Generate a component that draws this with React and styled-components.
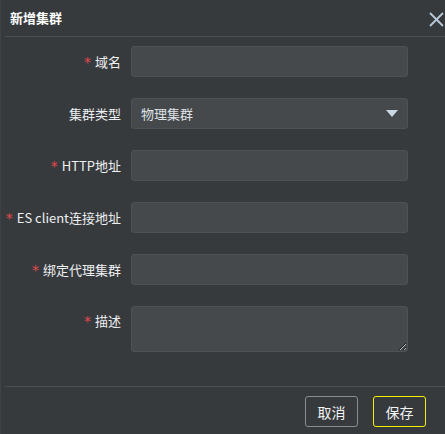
import React from 'react';
import styled, { createGlobalStyle } from 'styled-components';

// 全局样式
const GlobalStyle = createGlobalStyle`
  html, body {
    margin: 0;
    padding: 0;
    background: #373a3d;
  }
  body {
    font-family: "Noto Sans CJK SC", "Noto Sans", sans-serif;
    color: #e9ecef;
  }
`;

const Dialog = styled.div`
  width: 445px;
  height: 434px;
  box-sizing: border-box;
  background: #373a3d;
  border-left: 1px solid #3f4245;
  display: flex;
  flex-direction: column;
`;

const Header = styled.div`
  height: 36px;
  flex: none;
  margin-left: 4px;
  padding-left: 5px;
  border-bottom: 1px solid #4a4d51;
  display: flex;
  align-items: center;
  justify-content: space-between;
`;

const Title = styled.div`
  font-size: 13px;
  font-weight: 700;
  color: #ffffff;
  margin-top: -1px;
`;

const Close = styled.button`
  width: 16px;
  height: 16px;
  padding: 0;
  margin-right: 1px;
  margin-top: 2px;
  border: none;
  background: transparent;
  display: flex;
  align-items: center;
  justify-content: center;
  cursor: pointer;
`;

const Form = styled.div`
  flex: 1;
  padding-top: 9px;
  display: flex;
  flex-direction: column;
  gap: 21px;
`;

const Row = styled.div`
  display: flex;
  align-items: ${p => (p.$top ? 'flex-start' : 'center')};
  gap: 10px;
`;

const Label = styled.label`
  width: 120px;
  text-align: right;
  font-size: 13px;
  line-height: 18px;
  color: #eef0f2;
  white-space: nowrap;
  padding-top: ${p => (p.$top ? '6px' : '0')};
`;

const Star = styled.span`
  color: #e5484d;
  margin-right: 4px;
  font-size: 14px;
  font-family: "DejaVu Sans", sans-serif;
`;

const fieldBase = `
  width: 277px;
  box-sizing: border-box;
  background: #46494c;
  border: 1px solid #4e5155;
  border-radius: 3px;
  color: #dfe3e8;
  font-family: inherit;
  font-size: 13px;
  outline: none;
`;

const Input = styled.input`
  ${fieldBase}
  height: 31px;
  padding: 0 10px;
`;

const SelectBox = styled.div`
  ${fieldBase}
  height: 31px;
  padding: 0 9px;
  display: flex;
  align-items: center;
  justify-content: space-between;
`;

const TextArea = styled.textarea`
  ${fieldBase}
  display: block;
  height: 46px;
  padding: 6px 10px;
  resize: vertical;
`;

const Footer = styled.div`
  flex: none;
  margin-left: 4px;
  border-top: 1px solid #4a4d51;
  height: 48px;
  display: flex;
  justify-content: flex-end;
  align-items: flex-start;
  gap: 15px;
  padding: 9px 19px 0 0;
  box-sizing: border-box;
`;

const Button = styled.button`
  width: 53px;
  height: 31px;
  box-sizing: border-box;
  border-radius: 3px;
  background: transparent;
  border: 1px solid ${p => (p.$primary ? '#f5ef00' : '#8a8c8f')};
  color: #f2f4f6;
  font-family: inherit;
  font-size: 14px;
  padding: 0;
  cursor: pointer;
`;

const fields = [
  { label: '域名', required: true, type: 'input' },
  { label: '集群类型', required: false, type: 'select', value: '物理集群' },
  { label: 'HTTP地址', required: true, type: 'input' },
  { label: 'ES client连接地址', required: true, type: 'input' },
  { label: '绑定代理集群', required: true, type: 'input' },
  { label: '描述', required: true, type: 'textarea' },
];

const App = () => (
  <>
    <GlobalStyle />
    <Dialog>
      <Header>
        <Title>新增集群</Title>
        <Close aria-label="close">
          <svg width="15" height="15" viewBox="0 0 15 15">
            <path d="M1 1 L14 14 M14 1 L1 14" stroke="#b9c9d9" strokeWidth="1.8" />
          </svg>
        </Close>
      </Header>
      <Form>
        {fields.map(f => (
          <Row key={f.label} $top={f.type === 'textarea'}>
            <Label $top={f.type === 'textarea'}>
              {f.required && <Star>*</Star>}
              {f.label}
            </Label>
            {f.type === 'input' && <Input />}
            {f.type === 'textarea' && <TextArea />}
            {f.type === 'select' && (
              <SelectBox>
                <span>{f.value}</span>
                <svg width="12" height="7" viewBox="0 0 12 7">
                  <path d="M0 0 L12 0 L6 7 Z" fill="#c9d6e3" />
                </svg>
              </SelectBox>
            )}
          </Row>
        ))}
      </Form>
      <Footer>
        <Button>取消</Button>
        <Button $primary>保存</Button>
      </Footer>
    </Dialog>
  </>
);

export default App;
